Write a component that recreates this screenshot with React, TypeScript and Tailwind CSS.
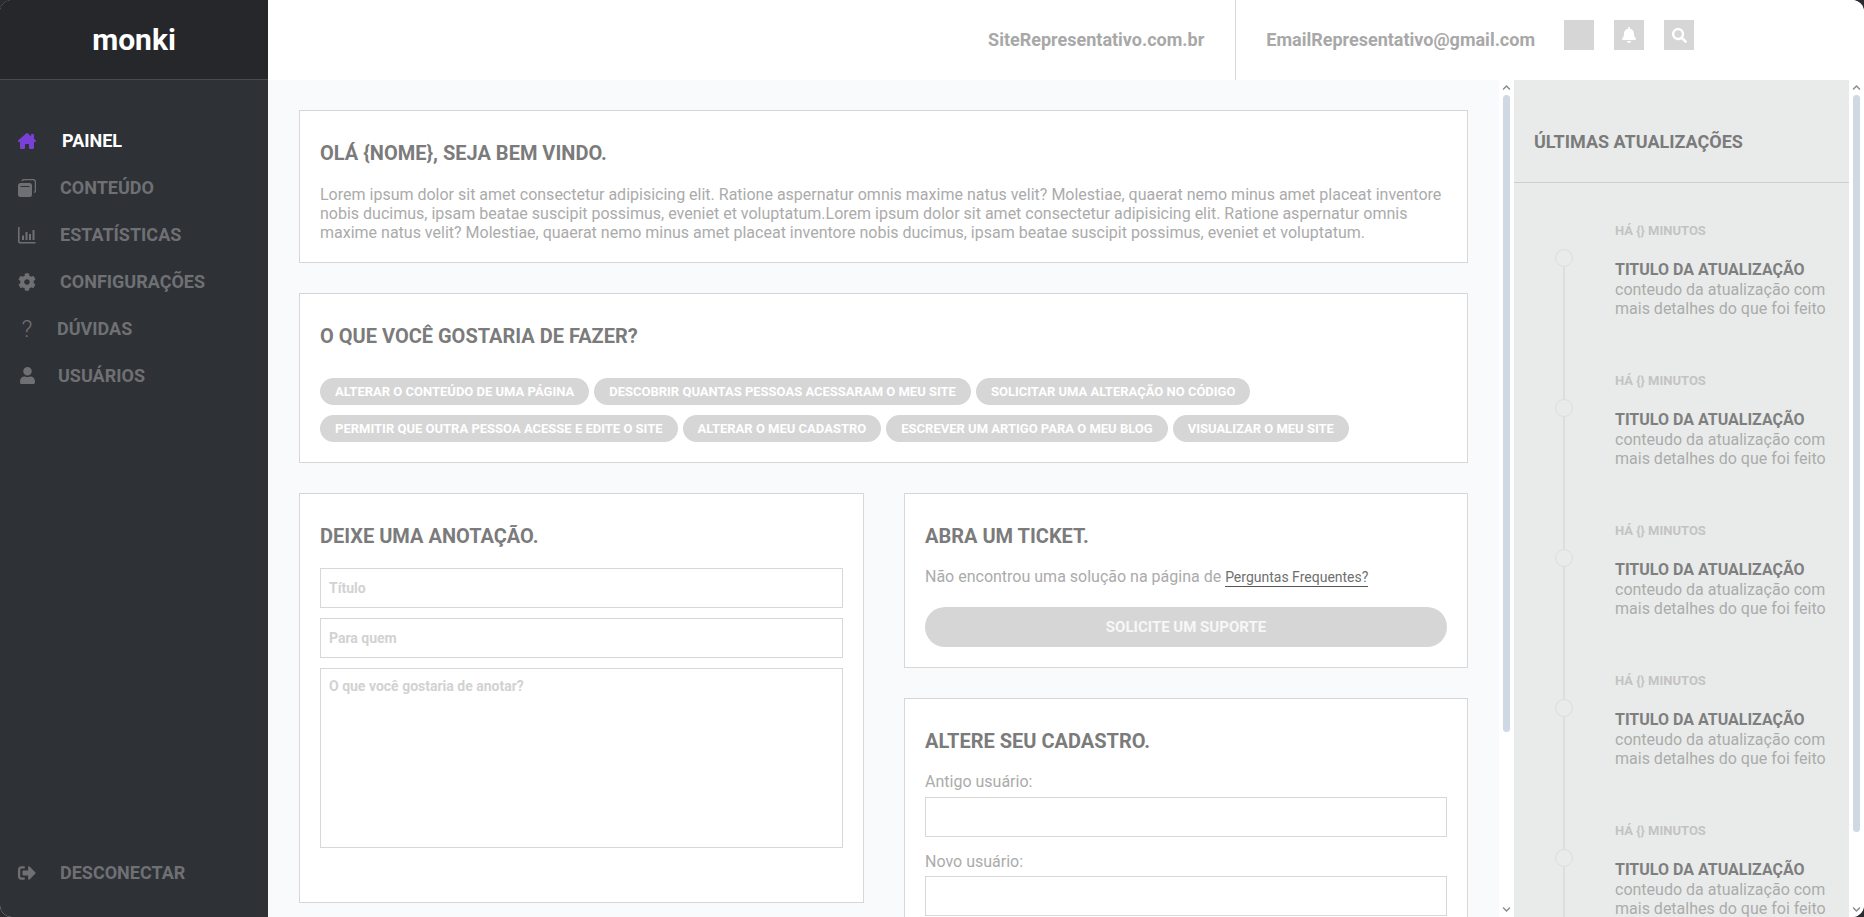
import React from "react";
import { FaCog, FaUser, FaSignOutAlt, FaBell, FaSearch, FaChevronUp, FaChevronDown } from "react-icons/fa";
import { FaHouseChimney } from "react-icons/fa6";

const font = { fontFamily: "Roboto, sans-serif" };

function CopyIcon() {
  return (
    <svg viewBox="0 0 18 18" className="w-[18px] h-[18px]" fill="#6f7073">
      <rect x="0" y="4" width="14" height="14" rx="2.5" />
      <path d="M4 2.2 a2 2 0 0 1 2-1.6 h9 a2.4 2.4 0 0 1 2.4 2.4 v8.5 a2 2 0 0 1-1.4 2" fill="none" stroke="#6f7073" strokeWidth="1.3" />
      <rect x="2.5" y="7" width="9" height="1" fill="#2e3136" />
    </svg>
  );
}

function ChartIcon() {
  return (
    <svg viewBox="0 0 18 18" className="w-[18px] h-[18px]" fill="#6f7073">
      <path d="M0.8 1 V15.5 a1.2 1.2 0 0 0 1.2 1.2 H17.5" fill="none" stroke="#6f7073" strokeWidth="1.6" />
      <rect x="4" y="9.5" width="2" height="4.5" />
      <rect x="7.5" y="6" width="2" height="8" />
      <rect x="11" y="8" width="2" height="6" />
      <rect x="14.5" y="4" width="2" height="10" />
    </svg>
  );
}

function Question() {
  return <span className="block w-[18px] text-center text-[24px] leading-none font-light text-[#6f7073]">?</span>;
}

function NavItem({ icon, label, textClass }: { icon: React.ReactNode; label: string; textClass: string }) {
  return (
    <div className="flex items-center h-[47px] pl-[18px]">
      <div className="w-[18px] flex justify-center shrink-0">{icon}</div>
      <span className={textClass}>{label}</span>
    </div>
  );
}

function Heading({ children }: { children: React.ReactNode }) {
  return <h2 className="text-[20px] leading-[22px] font-bold text-[#7b7b7b] uppercase">{children}</h2>;
}

function Card({ children, className }: { children: React.ReactNode; className: string }) {
  return <section className={"bg-white border border-[#d7d7d7] px-[20px] " + className}>{children}</section>;
}

function Pill({ children }: { children: React.ReactNode }) {
  return (
    <span className="h-[27px] flex items-center rounded-full bg-[#d6d6d6] px-[15px] text-[13px] font-bold text-white uppercase whitespace-nowrap">
      {children}
    </span>
  );
}

function Scroll({ thumbClass }: { thumbClass: string }) {
  return (
    <div className="w-[15px] shrink-0 bg-white flex flex-col items-center pt-[3px] pb-[3px]">
      <FaChevronUp className="w-[9px] h-[9px] text-[#8b8b8b] shrink-0" />
      <div className="flex-1 w-full flex flex-col items-center pt-[3px]">
        <div className={"w-[7px] rounded-[4px] bg-[#cfd9e3] " + thumbClass} />
      </div>
      <FaChevronDown className="w-[9px] h-[9px] text-[#8b8b8b] shrink-0" />
    </div>
  );
}

function Update({ last }: { last?: boolean }) {
  return (
    <div className="flex h-[150px] shrink-0">
      <div className="w-[18px] ml-[41px] flex flex-col items-center pt-[26px]">
        <div className="w-[18px] h-[18px] rounded-full border border-[#dcdedd] shrink-0" />
        {!last && <div className="w-[2px] h-[132px] shrink-0 bg-[#dcdedd]" />}
      </div>
      <div className="ml-[42px]">
        <p className="text-[13px] leading-[16px] font-bold text-[#c3c3c3] uppercase">Há {"{}"} Minutos</p>
        <p className="mt-[21px] text-[16px] leading-[20px] font-bold text-[#7f7f7f] uppercase whitespace-nowrap">Titulo da Atualização</p>
        <p className="text-[16px] leading-[19px] text-[#ababab] whitespace-nowrap">conteudo da atualização com</p>
        <p className="text-[16px] leading-[19px] text-[#ababab] whitespace-nowrap">mais detalhes do que foi feito</p>
      </div>
    </div>
  );
}

const inputCls = "block w-full h-[40px] border border-[#d7d7d7] bg-white px-[8px] text-[14px] font-bold outline-none placeholder:text-[#d2d2d2]";
const navText = "text-[18px] font-bold text-[#6f7073] uppercase whitespace-nowrap";

export default function App() {
  return (
    <div className="h-screen overflow-hidden bg-[#2a2b2f]" style={font}>
      <div className="flex h-full rounded-[12px] overflow-hidden bg-white">
        <aside className="w-[268px] shrink-0 flex flex-col bg-[#2e3136]">
          <div className="h-[80px] shrink-0 flex items-center justify-center bg-[#26272b] border-b border-[#4a4b4f]">
            <span className="text-[30px] font-bold text-white">monki</span>
          </div>
          <nav className="flex-1 flex flex-col pt-[37px]">
            <NavItem icon={<FaHouseChimney className="w-[22px] h-[20px] text-[#7a3fd6]" />} label="Painel" textClass="ml-[26px] text-[18px] font-bold text-white uppercase" />
            <NavItem icon={<CopyIcon />} label="Conteúdo" textClass={"ml-[24px] " + navText} />
            <NavItem icon={<ChartIcon />} label="Estatísticas" textClass={"ml-[24px] " + navText} />
            <NavItem icon={<FaCog className="w-[18px] h-[18px] text-[#6f7073]" />} label="Configurações" textClass={"ml-[24px] " + navText} />
            <NavItem icon={<Question />} label="Dúvidas" textClass={"ml-[21px] " + navText} />
            <NavItem icon={<FaUser className="w-[17px] h-[17px] text-[#6f7073]" />} label="Usuários" textClass={"ml-[22px] " + navText} />
          </nav>
          <div className="pb-[21px]">
            <NavItem icon={<FaSignOutAlt className="w-[18px] h-[18px] text-[#6f7073]" />} label="Desconectar" textClass={"ml-[24px] " + navText} />
          </div>
        </aside>

        <div className="flex-1 min-w-0 flex flex-col">
          <header className="h-[80px] shrink-0 flex items-stretch justify-end pr-[170px] bg-white">
            <div className="flex items-center pr-[31px] pb-[1px] border-r border-[#d7d7d7]">
              <span className="text-[18px] font-bold text-[#a8a8a8]">SiteRepresentativo.com.br</span>
            </div>
            <div className="flex items-center pl-[30px] pb-[1px]">
              <span className="text-[18px] font-bold text-[#a8a8a8]">EmailRepresentativo@gmail.com</span>
              <div className="flex gap-[20px] ml-[29px] pb-[9px]">
                <div className="w-[30px] h-[30px] bg-[#d6d6d6]" />
                <div className="w-[30px] h-[30px] bg-[#d6d6d6] flex items-center justify-center">
                  <FaBell className="w-[16px] h-[16px] text-white" />
                </div>
                <div className="w-[30px] h-[30px] bg-[#d6d6d6] flex items-center justify-center">
                  <FaSearch className="w-[15px] h-[15px] text-white" />
                </div>
              </div>
            </div>
          </header>

          <div className="flex-1 min-h-0 flex">
            <main className="flex-1 min-w-0 overflow-hidden bg-[#f9fafc] px-[31px] pt-[30px] flex flex-col gap-[30px]">
              <Card className="h-[153px] shrink-0 pt-[31px]">
                <Heading>Olá {"{nome}"}, seja bem vindo.</Heading>
                <p className="mt-[21px] text-[16px] leading-[19px] text-[#ababab]">
                  Lorem ipsum dolor sit amet consectetur adipisicing elit. Ratione aspernatur omnis maxime natus velit? Molestiae, quaerat nemo minus amet placeat inventore nobis ducimus, ipsam beatae suscipit possimus, eveniet et voluptatum.Lorem ipsum dolor sit amet consectetur adipisicing elit. Ratione aspernatur omnis maxime natus velit? Molestiae, quaerat nemo minus amet placeat inventore nobis ducimus, ipsam beatae suscipit possimus, eveniet et voluptatum.
                </p>
              </Card>
              <Card className="h-[170px] shrink-0 pt-[31px]">
                <Heading>O que você gostaria de fazer?</Heading>
                <div className="mt-[31px] flex flex-wrap gap-x-[5px] gap-y-[10px]">
                  <Pill>Alterar o conteúdo de uma página</Pill>
                  <Pill>Descobrir quantas pessoas acessaram o meu site</Pill>
                  <Pill>Solicitar uma alteração no código</Pill>
                  <Pill>Permitir que outra pessoa acesse e edite o site</Pill>
                  <Pill>Alterar o meu cadastro</Pill>
                  <Pill>Escrever um artigo para o meu blog</Pill>
                  <Pill>Visualizar o meu site</Pill>
                </div>
              </Card>
              <div className="grid grid-cols-[565px_564px] gap-x-[40px] items-start">
                <Card className="h-[410px] pt-[31px]">
                  <Heading>Deixe uma anotação.</Heading>
                  <input className={"mt-[21px] " + inputCls} placeholder="Título" />
                  <input className={"mt-[10px] " + inputCls} placeholder="Para quem" />
                  <textarea className={"mt-[10px] h-[180px] pt-[7px] resize-none " + inputCls} placeholder="O que você gostaria de anotar?" />
                </Card>
                <div className="flex flex-col gap-[30px]">
                  <Card className="h-[175px] pt-[31px]">
                    <Heading>Abra um ticket.</Heading>
                    <p className="mt-[20px] text-[16px] leading-[19px] text-[#ababab]">
                      Não encontrou uma solução na página de{" "}
                      <a className="text-[14px] text-[#6f6f6f] border-b border-[#555555] pb-[1px]">Perguntas Frequentes?</a>
                    </p>
                    <button className="mt-[20px] w-full h-[40px] rounded-full bg-[#d6d6d6] text-[15px] font-bold text-[#f7f7f7] uppercase">
                      Solicite um suporte
                    </button>
                  </Card>
                  <Card className="h-[300px] shrink-0 pt-[31px]">
                    <Heading>Altere seu cadastro.</Heading>
                    <p className="mt-[20px] text-[16px] leading-[19px] text-[#ababab]">Antigo usuário:</p>
                    <input className={"mt-[6px] " + inputCls} />
                    <p className="mt-[15px] text-[16px] leading-[19px] text-[#ababab]">Novo usuário:</p>
                    <input className={"mt-[5px] " + inputCls} />
                  </Card>
                </div>
              </div>
            </main>
            <Scroll thumbClass="h-[637px]" />
            <aside className="w-[335px] shrink-0 overflow-hidden bg-[#e9ebea] flex flex-col">
              <div className="h-[103px] shrink-0 flex items-center pl-[20px] border-b border-[#cdcfce] pt-[20px]">
                <h3 className="text-[18px] font-bold text-[#7b7b7b] uppercase">Últimas atualizações</h3>
              </div>
              <div className="flex-1 flex flex-col pt-[40px]">
                <Update />
                <Update />
                <Update />
                <Update />
                <Update />
              </div>
            </aside>
            <Scroll thumbClass="h-[737px]" />
          </div>
        </div>
      </div>
    </div>
  );
}
